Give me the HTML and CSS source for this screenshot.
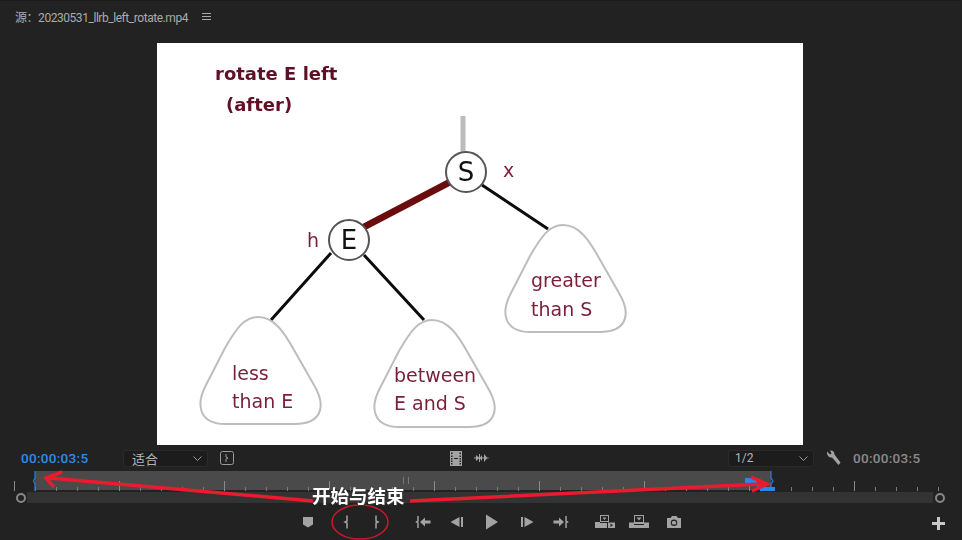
FILE: index.html
```html
<!DOCTYPE html>
<html>
<head>
    <meta charset="utf-8" />
    <title>Source Monitor</title>
    <link rel="stylesheet" href="styles.css">
</head>
<body>
    <div class="panel">
        <div class="header">
            <span class="title">源：20230531_llrb_left_rotate.mp4</span>
            <svg class="menu" width="9" height="7" viewBox="0 0 9 7"><path d="M0 .5h9M0 3.5h9M0 6.5h9"/></svg>
        </div>

        <div class="viewer">
            <svg class="slide" width="646" height="402" viewBox="157 43 646 402">
                <defs>
                    <path id="blob" d="M563 225C579 225 589 240 599 258L619 293C633 317 624 332 600 332L530 332C507 332 499 316 511 293L530 256C541 237 549 225 563 225Z"/>
                </defs>
                <g class="slide-art">
                    <text class="heading" x="215" y="80">rotate E left</text>
                    <text class="heading" x="226" y="111">(after)</text>

                    <path class="link-root" d="M463 116V153"/>
                    <path class="link-red" d="M362 228L450 182"/>
                    <path class="link" d="M482 185L548 229M331 253L271 320M364 255L424 320"/>

                    <use class="blob" href="#blob"/>
                    <use class="blob" href="#blob" transform="translate(-305 92)"/>
                    <use class="blob" href="#blob" transform="translate(-131 95)"/>

                    <circle class="node" cx="466" cy="172" r="20"/>
                    <circle class="node" cx="349" cy="240" r="20"/>
                    <text class="node-label" x="466" y="181">S</text>
                    <text class="node-label" x="349" y="249">E</text>

                    <text class="note" x="503" y="177">x</text>
                    <text class="note" x="307" y="247">h</text>
                    <text class="note" x="531" y="287">greater</text>
                    <text class="note" x="531" y="316">than S</text>
                    <text class="note" x="232" y="380">less</text>
                    <text class="note" x="232" y="408">than E</text>
                    <text class="note" x="394" y="382">between</text>
                    <text class="note" x="394" y="410">E and S</text>
                </g>
            </svg>
        </div>

        <div class="controls">
            <div class="controls-left">
                <span class="timecode current">00:00:03:5</span>
                <div class="select fit">
                    <span>适合</span>
                    <svg class="chevron" width="9" height="5" viewBox="0 0 9 5"><path d="M.5 .5L4.5 4.5L8.5 .5"/></svg>
                </div>
                <svg class="safe" width="14" height="14" viewBox="0 0 14 14"><rect x=".5" y=".5" width="13" height="13" rx="2"/><path d="M6 3V6L8 7L6 8V11"/></svg>
            </div>
            <div class="controls-mid">
                <svg width="14" height="15" viewBox="0 0 14 15"><path class="ico" fill-rule="evenodd" d="M1 0H13V15H1ZM2 1.500V3H3.500V1.500ZM2 4.500V6H3.500V4.500ZM2 7V8.500H3.500V7ZM2 9.500V11H3.500V9.500ZM2 12V13.500H3.500V12ZM10.500 1.500V3H12V1.500ZM10.500 4.500V6H12V4.500ZM10.500 7V8.500H12V7ZM10.500 9.500V11H12V9.500ZM10.500 12V13.500H12V12ZM5 7V8H9V7Z"/></svg>
                <svg class="wave" width="16" height="10" viewBox="0 0 16 10"><path class="ico" d="M0 4.500H2V2L5 4.500V1H6V4.500L8 2V4.500H10V1L13 4.500L16 5L13 5.500L10 9V5.500H8V8L6 5.500V9H5V5.500L2 8V5.500H0Z"/></svg>
            </div>
            <div class="controls-right">
                <div class="select zoom">
                    <span>1/2</span>
                    <svg class="chevron" width="9" height="5" viewBox="0 0 9 5"><path d="M.5 .5L4.500 4.500L8.500 .5"/></svg>
                </div>
                <svg class="wrench" width="15" height="16" viewBox="0 0 15 16"><path class="ico" d="M1 1.500L4 4.500L5.500 3.500L4 .5C6.500 0 8.500 1.500 8.500 4.500L14.500 12.500L12.500 15L6 7.500C3 8 .5 5 1 1.500Z"/></svg>
                <span class="timecode total">00:00:03:5</span>
            </div>
        </div>

        <div class="ruler"></div>

        <div class="scrub">
            <span class="knob"></span>
            <div class="track"></div>
            <span class="knob"></span>
        </div>

        <div class="transport">
            <svg class="tbtn" width="16" height="16" viewBox="0 0 16 16"><path class="ico" d="M3 3H13V10.500L8 13.500L3 10.500Z"/></svg>
            <svg class="tbtn sp-22" width="16" height="16" viewBox="0 0 16 16"><path class="brace" d="M9 1.500V7L7 8L9 9V14.500"/></svg>
            <svg class="tbtn sp-15" width="16" height="16" viewBox="0 0 16 16"><path class="brace" d="M7 1.500V7L9 8L7 9V14.500"/></svg>
            <svg class="tbtn sp-30" width="16" height="16" viewBox="0 0 16 16"><path class="brace" d="M3 2V7L1.500 8L3 9V14"/><path class="ico" d="M5 8L10 3.500V6.500H15.500V9.500H10V12.500Z"/></svg>
            <svg class="tbtn sp-18" width="16" height="16" viewBox="0 0 16 16"><path class="ico" d="M1.500 8L10.500 3V13ZM12 3H14V13H12Z"/></svg>
            <svg class="tbtn sp-18" width="16" height="16" viewBox="0 0 16 16"><path class="ico" d="M3 .5L15 8L3 15.500Z"/></svg>
            <svg class="tbtn sp-20" width="16" height="16" viewBox="0 0 16 16"><path class="ico" d="M14.500 8L5.500 3V13ZM2 3H4V13H2Z"/></svg>
            <svg class="tbtn sp-18" width="16" height="16" viewBox="0 0 16 16"><path class="brace" d="M13 2V7L14.500 8L13 9V14"/><path class="ico" d="M11 8L6 3.500V6.500H.5V9.500H6V12.500Z"/></svg>
            <svg class="tbtn sp-26" width="20" height="16" viewBox="0 0 20 16"><path class="ico" fill-rule="evenodd" d="M5 1H14V8H5ZM6 2V7H13V2ZM7.500 3.500H11.500L9.500 6ZM0 8H5V9H12V14H0ZM13 8.500H20V14H13ZM15.500 9.500V13L18 11.200Z"/></svg>
            <svg class="tbtn sp-14" width="20" height="16" viewBox="0 0 20 16"><path class="ico" fill-rule="evenodd" d="M5 1H15V8.500H20V14H0V8.500H5ZM6 2V8H14V2ZM7.500 3.500H12.500L10 6.500ZM5 10V11H15V10Z"/></svg>
            <svg class="tbtn sp-17" width="16" height="16" viewBox="0 0 16 16"><path class="ico" fill-rule="evenodd" d="M1 4H4.500L6 2H10.500L12 4H15V14H1ZM8 5.500A3.200 3.200 0 1 0 8 12A3.200 3.200 0 1 0 8 5.500ZM8 7A1.800 1.800 0 1 1 8 10.500A1.800 1.800 0 1 1 8 7Z"/></svg>
            <svg class="add" width="13" height="13" viewBox="0 0 13 13"><path d="M5 0H8V5H13V8H8V13H5V8H0V5H5Z"/></svg>
        </div>

        <!-- marks drawn on top of the screenshot -->
        <svg class="marks" width="962" height="540" viewBox="0 0 962 540">
            <path class="io" d="M35 471V478L33.500 481L35 484V491M771 471V478L773 481L771 484V490"/>
            <path class="head" d="M745 478H757V487H775V491H760V485H745Z"/>
            <path class="arrow" d="M49 478L313 501M62 472L46 478L54 487"/>
            <path class="arrow" d="M410 501L762 484M751 477L767 484L752 491"/>
            <ellipse class="circle" cx="360" cy="522" rx="28" ry="17"/>
        </svg>
        <span class="callout">开始与结束</span>
    </div>
</body>
</html>
```

FILE: styles.css
```css
html, body {
    margin: 0;
    height: 100%;
    overflow: hidden;
}

body {
    background: #222;
    font-family: Roboto, "Noto Sans CJK SC", sans-serif;
}

.panel {
    position: relative;
    width: 962px;
    height: 540px;
    box-sizing: border-box;
    border-left: 1px solid #1b1b1b;
    border-top: 1px solid #1b1b1b;
    margin-left: -1px;
}

/* Header */
.header {
    display: flex;
    align-items: center;
    height: 31px;
    padding-left: 15px;
}

.title {
    font-size: 12px;
    letter-spacing: -.45px;
    color: #ababab;
}

.menu {
    margin-left: 14px;
}

.menu path {
    stroke: #a9a9a9;
    fill: none;
}

/* Picture */
.viewer {
    display: flex;
    justify-content: center;
    padding-top: 11px;
}

.slide {
    display: block;
    background: #fff;
    margin-left: -1px;
}

/* the picture is a soft video frame */
.slide-art {
    filter: blur(.5px);
}

.heading {
    font: bold 18px "DejaVu Sans", sans-serif;
    fill: #5f1026;
}

.note {
    font: 19px "DejaVu Sans", sans-serif;
    fill: #7a1f3a;
}

.node-label {
    font: 26px "DejaVu Sans", sans-serif;
    fill: #111;
    text-anchor: middle;
}

.node {
    fill: #fff;
    stroke: #555;
    stroke-width: 2;
}

.blob {
    fill: #fff;
    stroke: #bdbdbd;
    stroke-width: 2;
}

.link-root {
    stroke: #bbb;
    stroke-width: 5;
    fill: none;
}

.link-red {
    stroke: #6a0c0c;
    stroke-width: 7;
    fill: none;
}

.link {
    stroke: #0c0c0c;
    stroke-width: 3;
    fill: none;
}

/* Row under the picture */
.controls {
    display: grid;
    grid-template-columns: 449px 279px 1fr;
    align-items: center;
    height: 26px;
}

.controls-left,
.controls-mid,
.controls-right {
    display: flex;
    align-items: center;
}

.controls-left {
    padding-left: 21px;
}

.timecode {
    font-size: 13.500px;
    font-weight: 500;
    letter-spacing: .3px;
}

.current {
    width: 102px;
    color: #2d8ceb;
}

.total {
    margin-left: 12px;
    color: #8b8b8b;
}

.select {
    display: flex;
    align-items: center;
    justify-content: space-between;
    box-sizing: border-box;
    height: 17px;
    padding: 0 5px 0 8px;
    background: #1c1c1c;
    border: 1px solid #2a2a2a;
    border-radius: 2px;
    font-size: 13px;
    color: #b5b5b5;
}

.fit {
    width: 85px;
}

.zoom {
    width: 86px;
    padding-left: 6px;
    font-size: 12px;
}

.chevron path {
    stroke: #999;
    fill: none;
}

.safe {
    margin-left: 12px;
}

.safe rect,
.safe path {
    stroke: #9a9a9a;
    fill: none;
}

.wave {
    margin-left: 11px;
}

.wrench {
    margin-left: 12px;
}

.ico {
    fill: #a3a3a3;
}

.brace {
    stroke: #a3a3a3;
    stroke-width: 1.500;
    fill: none;
}

/* Time ruler: band, then major and minor ticks */
.ruler {
    position: relative;
    width: 926px;
    height: 20px;
    margin-left: 14px;
    background-image:
        linear-gradient(to right, #8a8a8a 1px, transparent 1px),
        linear-gradient(to right, #7c7c7c 1px, transparent 1px),
        linear-gradient(#4a4a4a, #4a4a4a);
    background-size: 105px 10px, 21px 4px, 736px 19px;
    background-position: 0 bottom, 0 bottom, 21px 0;
    background-repeat: repeat-x, repeat-x, no-repeat;
}

.ruler::after {
    content: "";
    position: absolute;
    left: 389px;
    top: 6px;
    width: 4px;
    height: 7px;
    border-left: 1px solid #777;
    border-right: 1px solid #777;
}

.scrub {
    display: flex;
    align-items: center;
    height: 11px;
    margin-top: 1px;
    padding: 0 16px;
}

.track {
    flex: 1;
    height: 11px;
    margin: 0 2px 0 1px;
    background: #333;
}

.knob {
    box-sizing: border-box;
    width: 10px;
    height: 10px;
    border: 2.500px solid #888;
    border-radius: 50%;
}

/* Transport buttons */
.transport {
    display: flex;
    align-items: center;
    height: 37px;
    padding-left: 300px;
}

.tbtn {
    flex: none;
}

.sp-14 { margin-left: 14px; }
.sp-15 { margin-left: 15px; }
.sp-17 { margin-left: 17px; }
.sp-18 { margin-left: 18px; }
.sp-20 { margin-left: 20px; }
.sp-22 { margin-left: 22px; }
.sp-26 { margin-left: 26px; }
.sp-30 { margin-left: 30px; }

.add {
    margin-left: auto;
    margin-right: 16px;
    margin-top: 4px;
}

.add path {
    fill: #c9c9c9;
}

/* Annotations */
.marks {
    position: absolute;
    left: 0;
    top: -1px;
    pointer-events: none;
}

.io {
    stroke: #2a7fe0;
    stroke-width: 1.200;
    fill: none;
}

.head {
    fill: #2a86ea;
}

.arrow {
    stroke: #ea1b2e;
    stroke-width: 3.500;
    fill: none;
}

.circle {
    stroke: #c9182b;
    stroke-width: 1.500;
    fill: none;
}

.callout {
    position: absolute;
    left: 312px;
    top: 483px;
    font: bold 18.500px "Noto Sans CJK SC", sans-serif;
    line-height: 22px;
    color: #fff;
    text-shadow: 1px 1px 1px #333;
    white-space: nowrap;
}
```
